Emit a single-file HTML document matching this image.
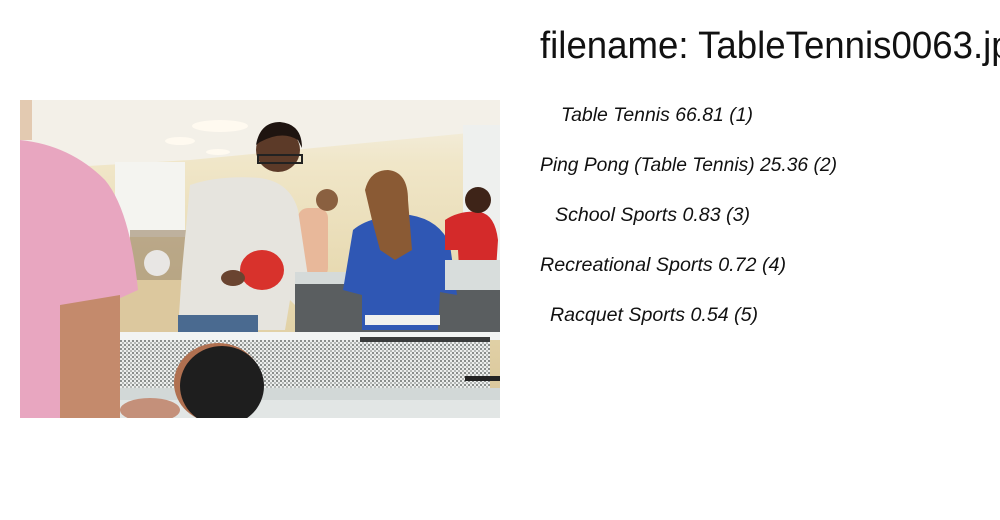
<!DOCTYPE html>
<html><head><meta charset="utf-8"><style>
html,body{margin:0;padding:0;background:#fff;width:1000px;height:520px;overflow:hidden}
svg{position:absolute;left:0;top:0}
</style></head><body>
<svg width="1000" height="520" viewBox="0 0 1000 520">
<defs>
<pattern id="net" width="4" height="4" patternUnits="userSpaceOnUse">
<rect width="4" height="4" fill="#eceeed"/><rect width="2" height="2" fill="#8a8e8c"/><rect x="2" y="2" width="2" height="2" fill="#b4b8b6"/>
</pattern>
<linearGradient id="wall" x1="0" y1="0" x2="0" y2="1">
<stop offset="0" stop-color="#f4f1e6"/><stop offset="0.2" stop-color="#f0e6c8"/><stop offset="0.6" stop-color="#e6d8ae"/><stop offset="1" stop-color="#d8c498"/>
</linearGradient>
<clipPath id="cp"><rect x="20" y="100" width="480" height="318"/></clipPath>
</defs>
<g clip-path="url(#cp)">
<g transform="translate(20,100)">
<rect width="480" height="318" fill="url(#wall)"/>
<path d="M0 0 L480 0 L480 30 L170 60 L0 70Z" fill="#f3f0e8"/>
<rect x="95" y="62" width="70" height="75" fill="#f4f4f0"/>
<rect x="443" y="25" width="37" height="160" fill="#eef0ee"/>
<ellipse cx="200" cy="26" rx="28" ry="6" fill="#fffaf0"/>
<ellipse cx="160" cy="41" rx="15" ry="4" fill="#fffaf0"/>
<ellipse cx="198" cy="52" rx="12" ry="3" fill="#fffaf0"/>
<rect x="110" y="130" width="75" height="50" fill="#9a8468" opacity="0.6"/>
<circle cx="137" cy="163" r="13" fill="#e8e6e4"/>
<rect x="95" y="180" width="140" height="55" fill="#dcc89e"/>
<rect x="278" y="108" width="30" height="70" rx="10" fill="#e8b89a"/>
<circle cx="307" cy="100" r="11" fill="#8a6040"/>
<path d="M170 85 Q200 75 240 78 Q270 82 278 110 L290 190 L300 200 L285 215 L270 200 L265 230 L158 230 L162 170 L170 85Z" fill="#e6e4de"/>
<path d="M290 190 L345 200 L350 215 L295 210Z" fill="#e2e0da"/>
<ellipse cx="335" cy="208" rx="12" ry="8" fill="#6a4430"/>
<circle cx="258" cy="50" r="22" fill="#5c3a28"/>
<path d="M236 45 Q240 22 260 22 Q282 24 282 48 L278 40 Q262 30 240 42Z" fill="#1e1410"/>
<rect x="238" y="55" width="44" height="8" fill="none" stroke="#222" stroke-width="2"/>
<rect x="158" y="215" width="80" height="20" fill="#4a6a90"/>
<ellipse cx="242" cy="170" rx="22" ry="20" fill="#d8322c"/>
<ellipse cx="213" cy="178" rx="12" ry="8" fill="#6a4430"/>
<rect x="275" y="180" width="205" height="55" fill="#5a5e60"/>
<rect x="275" y="172" width="205" height="12" fill="#d5dad9"/>
<path d="M333 130 Q350 115 390 115 Q420 120 430 145 L437 195 L420 192 L418 230 L342 230 L342 195 L323 190 Z" fill="#2f57b4"/>
<path d="M345 90 Q350 70 368 70 Q388 72 388 100 L392 150 L375 160 L360 150 L352 120Z" fill="#8a5a34"/>
<rect x="345" y="215" width="75" height="10" fill="#f0f0ee"/>
<path d="M425 120 Q440 110 460 112 Q475 115 478 140 L475 185 L440 185 L438 150 L425 150Z" fill="#d42a2a"/>
<circle cx="458" cy="100" r="13" fill="#3e2418"/>
<rect x="425" y="160" width="55" height="30" fill="#d8dddc"/>
<!-- pink person -->
<path d="M0 40 Q50 45 85 80 Q110 110 118 190 L85 205 L40 318 L0 318Z" fill="#e8a6c0"/>
<path d="M40 205 L100 195 L100 318 L40 318Z" fill="#c48a6c"/>
<rect x="0" y="0" width="12" height="40" fill="#d8b08c" opacity="0.6"/>
<rect x="100" y="232" width="380" height="8" fill="#f2f4f3"/>
<rect x="100" y="240" width="370" height="50" fill="url(#net)"/>
<rect x="340" y="237" width="130" height="5" fill="#3a3c3c"/>
<rect x="445" y="276" width="35" height="5" fill="#222"/>
<rect x="100" y="288" width="380" height="30" fill="#d2d8d7"/>
<rect x="100" y="300" width="380" height="18" fill="#e2e6e5"/>
<ellipse cx="198" cy="283" rx="44" ry="40" fill="#b07050"/>
<ellipse cx="202" cy="286" rx="42" ry="40" fill="#1e1e1e"/>
<ellipse cx="130" cy="310" rx="30" ry="12" fill="#c4907a"/>
</g>
</g>
<g font-family="'Liberation Sans', 'DejaVu Sans', sans-serif" fill="#111">
<text x="540" y="58" font-size="38" textLength="492" lengthAdjust="spacingAndGlyphs">filename: TableTennis0063.jpg</text>
<g font-style="italic" font-size="19">
<text x="561" y="121" textLength="192" lengthAdjust="spacingAndGlyphs">Table Tennis 66.81 (1)</text>
<text x="540" y="171" textLength="297" lengthAdjust="spacingAndGlyphs">Ping Pong (Table Tennis) 25.36 (2)</text>
<text x="555" y="221" textLength="195" lengthAdjust="spacingAndGlyphs">School Sports  0.83 (3)</text>
<text x="540" y="271" textLength="246" lengthAdjust="spacingAndGlyphs">Recreational Sports  0.72 (4)</text>
<text x="550" y="321" textLength="208" lengthAdjust="spacingAndGlyphs">Racquet Sports  0.54 (5)</text>
</g>
</g>
</svg>
</body></html>
